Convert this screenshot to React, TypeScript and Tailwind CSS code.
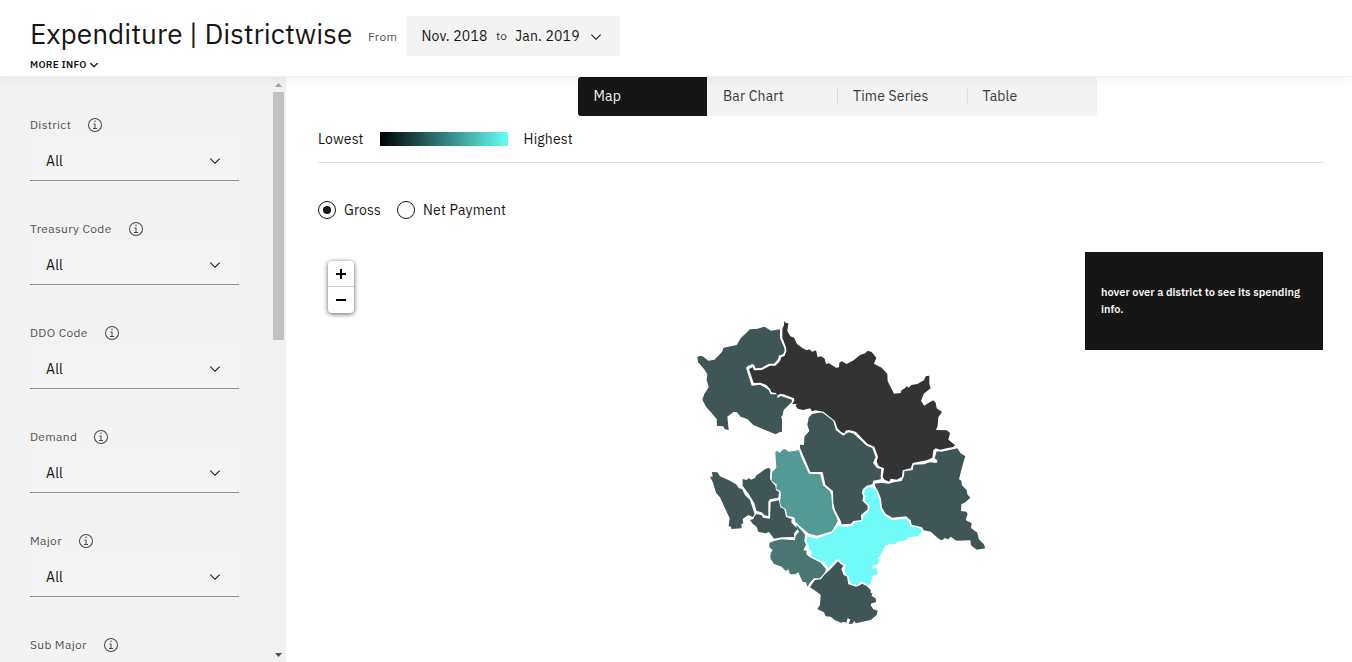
import React from "react";

const DARK = "#405555";

type Region = { name: string; fill: string; x: number; y: number; points: string };

// Outlines are drawn at three times their size on the page, relative to (x, y).
const regions: Region[] = [
  {
    name: "Chamba", fill: DARK, x: 690, y: 315,
    points: "22,126 29,123 38,124 55,137 73,134 96,111 101,98 140,90 152,70 180,43 203,41 224,35 243,47 270,43 270,70 282,97 284,108 280,117 267,122 263,134 252,146 237,146 214,159 196,160 193,150 188,147 173,153 168,158 185,212 210,209 226,218 236,225 242,238 260,238 263,249 273,243 306,254 305,262 281,285 278,300 273,306 276,312 276,350 268,352 257,358 220,343 190,330 172,312 152,305 140,291 130,291 112,305 116,345 105,343 100,334 81,333 80,312 65,294 49,277 37,254 43,237 56,217 50,195 52,178 42,162 24,141",
  },
  {
    name: "Lahaul and Spiti", fill: "#333333", x: 780, y: 315,
    points: "13,18 18,24 25,25 22,48 31,64 42,68 51,87 67,99 80,106 87,103 97,110 108,106 113,127 123,124 134,131 138,147 147,145 168,158 177,157 178,143 185,139 200,147 222,135 240,120 256,115 263,107 275,111 289,128 282,146 305,158 322,177 323,199 342,236 362,234 365,225 373,221 380,214 386,218 394,210 412,207 432,196 437,184 448,182 448,207 452,220 431,236 423,258 433,272 444,265 460,256 467,263 470,280 486,291 475,307 473,332 468,345 500,346 510,354 505,374 525,390 520,396 500,400 480,404 467,400 460,406 457,428 440,436 398,444 392,460 368,466 366,485 350,494 332,491 328,500 314,494 308,486 312,460 296,453 290,440 294,425 283,395 262,386 228,351 220,348 205,345 196,347 194,355 184,352 172,340 165,318 130,290 105,286 95,289 91,280 70,285 53,281 47,272 50,267 37,267 43,256 42,250 10,238 -1,237 -8,242 -12,234 -26,232 -30,221 -41,210 -58,203 -79,204 -93,162 -82,157 -78,166 -54,165 -30,152 -14,152 0,138 4,127 14,122 19,108 18,97 7,68 7,42 12,30",
  },
  {
    name: "Kullu", fill: DARK, x: 800, y: 440,
    points: "26,-67 36,-78 55,-82 68,-82 100,-57 108,-29 130,-13 140,-20 147,-23 161,-19 200,17 217,24 227,52 219,68 230,83 244,88 242,108 243,118 220,122 217,133 200,137 188,148 186,160 190,170 187,182 203,198 203,208 183,225 184,240 160,243 153,251 125,253 121,240 105,210 100,190 99,153 76,134 68,96 31,96 4,33 0,24 0,14 12,15 13,-10 28,-27 22,-45",
  },
  {
    name: "Kinnaur", fill: DARK, x: 800, y: 440,
    points: "224,131 245,128 265,131 285,126 305,123 312,108 313,94 338,90 341,74 372,73 390,67 410,69 413,62 404,55 410,34 425,35 472,25 482,40 496,49 488,75 477,118 484,122 486,136 500,150 502,163 511,173 496,187 484,193 483,213 499,215 503,222 497,240 515,250 513,264 532,278 536,297 551,312 556,325 530,329 513,316 511,301 469,302 452,290 445,298 433,294 428,300 420,299 402,284 393,275 371,271 366,262 352,258 335,254 332,241 318,229 277,233 257,221 246,203 243,176 234,153 226,140",
  },
  {
    name: "Shimla", fill: "#70fafa", x: 800, y: 440,
    points: "194,150 205,142 220,143 230,152 232,166 239,180 241,206 256,228 275,240 315,236 326,243 330,258 350,262 364,268 365,276 355,289 330,291 316,301 292,306 286,312 270,311 256,318 248,332 240,348 233,352 238,360 232,375 218,376 217,388 229,383 233,395 230,405 219,406 212,428 205,437 190,427 183,425 172,435 150,430 147,410 136,400 134,388 138,374 126,368 115,357 105,362 86,384 72,367 40,352 32,345 36,334 25,328 27,318 20,306 22,289 50,296 63,291 95,280 115,257 135,261 158,257 165,247 187,245 190,228 207,212 208,196 194,182 197,168 191,160",
  },
  {
    name: "Sirmaur", fill: DARK, x: 800, y: 440,
    points: "114,364 122,372 130,376 124,388 131,405 141,410 145,433 168,440 180,436 186,431 200,438 212,450 213,460 217,459 215,468 227,475 228,487 214,490 212,496 220,508 233,512 230,525 212,540 167,550 163,543 157,551 146,552 151,538 143,535 139,548 128,545 125,549 105,541 92,530 77,529 72,517 52,507 60,495 62,465 50,455 30,442 36,432 45,420 63,418 73,404 87,392",
  },
  {
    name: "Mandi", fill: "#539994", x: 700, y: 435,
    points: "226,50 232,48 240,54 247,44 255,42 266,50 297,46 305,70 327,116 361,118 369,151 389,168 394,180 397,220 414,257 396,289 370,296 350,302 325,295 300,274 286,260 284,248 277,245 262,243 257,222 243,214 240,200 243,180 241,168 229,162 230,148 215,138 216,112 229,98 227,72",
  },
  {
    name: "Una", fill: DARK, x: 700, y: 435,
    points: "36,111 52,112 60,124 90,137 108,148 117,160 126,162 135,180 150,195 164,238 158,246 145,240 128,252 130,265 124,268 125,280 94,282 93,275 86,274 89,250 75,220 60,187 48,173 38,140 30,125 38,125",
  },
  {
    name: "Hamirpur", fill: DARK, x: 700, y: 435,
    points: "128,132 140,135 147,129 153,134 166,128 168,122 195,103 205,98 211,102 210,132 216,142 226,152 228,166 237,170 235,188 210,193 205,200 205,243 195,241 185,232 170,228 163,205 145,175 128,153",
  },
  {
    name: "Bilaspur", fill: DARK, x: 700, y: 435,
    points: "212,201 237,196 241,217 253,223 258,246 275,252 274,262 283,272 293,282 282,295 282,306 247,307 222,311 207,291 197,295 175,290 170,275 158,266 150,255 160,252 164,242 170,237 185,241 189,248 210,251",
  },
  {
    name: "Solan", fill: "#497572", x: 700, y: 435,
    points: "208,324 222,318 245,313 285,316 287,302 297,290 288,276 290,271 311,293 315,300 313,317 318,330 310,345 320,348 319,358 330,367 362,383 378,402 375,412 360,430 342,430 332,440 322,455 318,442 308,441 295,412 285,418 270,418 265,403 257,408 245,395 222,387 211,370 212,355 218,345 208,337",
  },
];

function DistrictMap() {
  return (
    <svg className="block h-[320px] w-[310px]" viewBox="686 312 310 320">
      {regions.map((r) => (
        <polygon key={r.name} points={r.points} fill={r.fill} transform={`translate(${r.x} ${r.y}) scale(0.33333)`} />
      ))}
    </svg>
  );
}

function Chevron({ className }: { className?: string }) {
  return (
    <svg className={className} viewBox="0 0 16 16" fill="currentColor">
      <path d="M8 11L3 6l.7-.7L8 9.6l4.3-4.3.7.7z" />
    </svg>
  );
}

function InfoIcon() {
  return (
    <svg className="h-4 w-4 text-[#474747]" viewBox="0 0 32 32" fill="currentColor">
      <path d="M17 22v-9h-4v2h2v7h-3v2h8v-2zM16 7a1.5 1.5 0 1 0 1.5 1.5A1.5 1.5 0 0 0 16 7z" />
      <path d="M16 30a14 14 0 1 1 14-14 14 14 0 0 1-14 14zm0-26a12 12 0 1 0 12 12A12 12 0 0 0 16 4z" />
    </svg>
  );
}

function FilterLabel({ label }: { label: string }) {
  return (
    <div className="flex h-4 shrink-0 items-center gap-4 text-[12px] leading-4 tracking-[0.32px] text-[#525252]">
      <span>{label}</span>
      <InfoIcon />
    </div>
  );
}

function Filter({ label }: { label: string }) {
  return (
    <div className="h-[104px] shrink-0">
      <FilterLabel label={label} />
      <div className="mt-2 flex h-10 w-[209px] items-center justify-between border-b border-[#8d8d8d] bg-[#f4f4f4] pr-4 pl-4">
        <span className="pt-0.5 text-[14px] tracking-[0.16px] text-[#161616]">All</span>
        <Chevron className="h-4 w-4 text-[#161616]" />
      </div>
    </div>
  );
}

const filters = ["District", "Treasury Code", "DDO Code", "Demand", "Major"];

function Sidebar() {
  return (
    <aside className="flex h-full w-[286px] shrink-0 bg-[#f3f3f3]">
      <div className="flex flex-1 flex-col overflow-hidden pt-10 pl-[30px]">
        {filters.map((f) => (
          <Filter key={f} label={f} />
        ))}
        <FilterLabel label="Sub Major" />
      </div>
      <div className="flex w-[15px] flex-col items-center bg-[#f1f1f1]">
        <svg className="h-[15px] w-[15px] shrink-0" viewBox="0 0 15 15">
          <path d="M4 10L7.5 6L11 10z" fill="#a3a3a3" />
        </svg>
        <div className="h-[248px] w-[11px] bg-[#c1c1c1]" />
        <svg className="mt-auto h-[15px] w-[15px] shrink-0" viewBox="0 0 15 15">
          <path d="M4 6L7.5 10L11 6z" fill="#505050" />
        </svg>
      </div>
    </aside>
  );
}

function Header() {
  return (
    <header className="relative z-10 h-[77px] shrink-0 border-b border-[#f0f0f0] bg-white pl-[30px] shadow-[0_2px_12px_rgba(0,0,0,0.06)]">
      <div className="flex h-14 pt-4">
        <h1 className="w-[338px] text-[28px] leading-9 whitespace-nowrap text-[#161616]">
          Expenditure | Districtwise
        </h1>
        <span className="mt-[13px] w-[38px] text-[12px] leading-4 tracking-[0.32px] text-[#525252]">From</span>
        <button className="flex h-10 w-[214px] items-center bg-[#f3f3f3] pl-[15.5px] text-[14px] tracking-[0.16px] whitespace-nowrap text-[#161616]">
          <span className="w-[74.5px] text-left">Nov. 2018</span>
          <span className="w-[19px] text-left text-[12px] text-[#393939]">to</span>
          <span className="w-[73px] text-left">Jan. 2019</span>
          <Chevron className="mt-px h-4 w-4" />
        </button>
      </div>
      <div className="flex h-4 items-center text-[10px] font-semibold tracking-[0.25px] text-[#161616]">
        <span className="w-[58px] whitespace-nowrap">MORE INFO</span>
        <Chevron className="mt-px h-3 w-3 stroke-current" />
      </div>
    </header>
  );
}

function Tabs() {
  return (
    <nav className="ml-[260px] flex h-[39px] w-[519px] overflow-hidden rounded-[3px] bg-[#f3f3f3] pb-px text-[14px] tracking-[0.16px] text-[#393939]">
      <div className="-mb-px flex w-[129px] items-center bg-[#161616] pb-px pl-[15.5px] text-[#f4f4f4]">Map</div>
      <div className="flex w-[130px] items-center pl-4">Bar Chart</div>
      <div className="flex w-[130px] items-center">
        <i className="h-4 w-px bg-[#e0e0e0]" />
        <span className="pl-[15px]">Time Series</span>
      </div>
      <div className="flex w-[130px] items-center">
        <i className="h-4 w-px bg-[#e0e0e0]" />
        <span className="pl-[14.5px]">Table</span>
      </div>
    </nav>
  );
}

function Radio({ checked }: { checked?: boolean }) {
  return (
    <span className="mr-2 flex h-[18px] w-[18px] items-center justify-center rounded-full border border-[#161616]">
      {checked && <span className="h-2 w-2 rounded-full bg-[#161616]" />}
    </span>
  );
}

export default function App() {
  return (
    <div className="flex h-[662px] w-[1352px] flex-col overflow-hidden bg-white font-['IBM_Plex_Sans',Roboto,sans-serif]">
      <Header />
      <div className="flex min-h-0 flex-1">
        <Sidebar />
        <main className="flex min-w-0 flex-1 flex-col pr-7 pl-8 text-[14px] tracking-[0.16px] text-[#161616]">
          <Tabs />
          <div className="flex h-[47px] items-center border-b border-[#e0e0e0]">
            <span className="w-[62px]">Lowest</span>
            <div className="h-[14px] w-32 bg-[linear-gradient(to_right,#000,#64fff8)]" />
            <span className="pl-[15.6px]">Highest</span>
          </div>
          <div className="flex h-[89px] items-center pt-[5px]">
            <Radio checked />
            <span className="w-[53px]">Gross</span>
            <Radio />
            <span>Net Payment</span>
          </div>
          <div className="flex">
            <div className="mt-[9px] ml-[10px] flex h-[52px] w-[26px] flex-col rounded-[4px] bg-white text-black shadow-[0_1px_5px_rgba(0,0,0,0.65)]">
              <button className="flex h-[26px] items-center justify-center border-b border-[#ccc]">
                <svg className="h-[10px] w-[10px]" viewBox="0 0 10 10"><path d="M0 5H10M5 0V10" stroke="#000" strokeWidth="2" /></svg>
              </button>
              <button className="flex h-[26px] items-center justify-center">
                <svg className="h-[10px] w-[10px]" viewBox="0 0 10 10"><path d="M0 5H10" stroke="#000" strokeWidth="2" /></svg>
              </button>
            </div>
            <div className="mt-[60px] ml-[332px]">
              <DistrictMap />
            </div>
            <div className="ml-[89px] h-[98px] w-[238px] shrink-0 bg-[#161616] px-4 pt-8 text-[11px] leading-[17px] font-semibold tracking-normal text-[#f4f4f4]">
              hover over a district to see its spending info.
            </div>
          </div>
        </main>
      </div>
    </div>
  );
}
